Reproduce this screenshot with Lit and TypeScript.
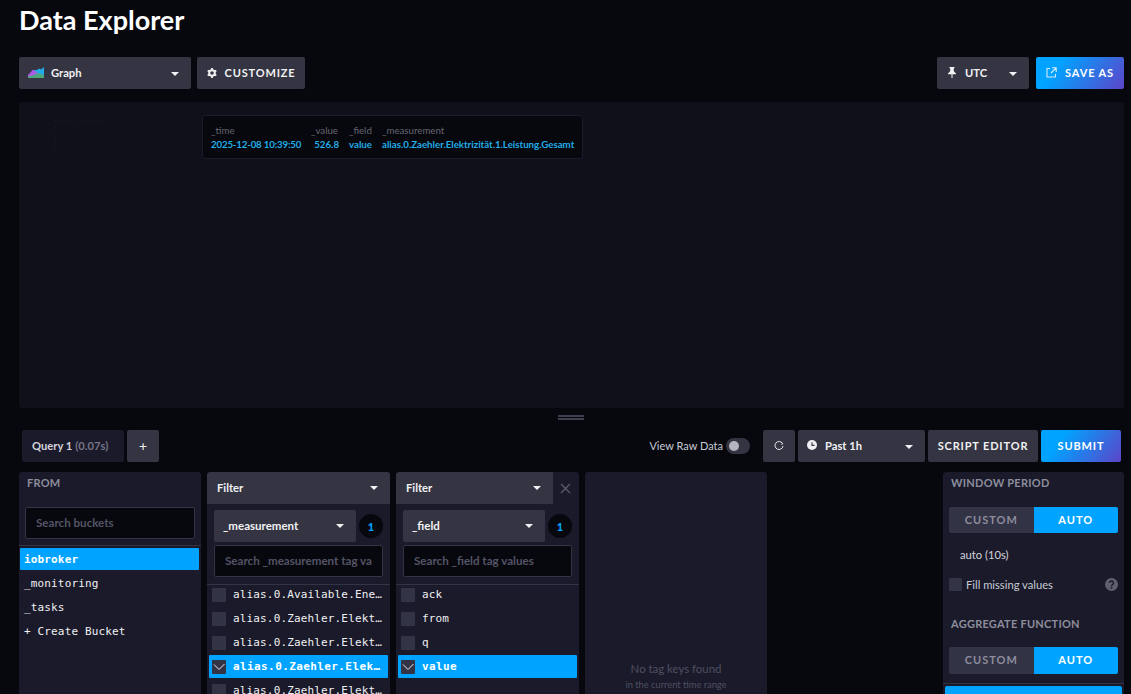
import { LitElement, html, css } from "lit";
import { customElement } from "lit/decorators.js";

const caret = html`<svg class="caret" width="8" height="4" viewBox="0 0 8 4"><path d="M0 0h8L4 4z" fill="#f1f1f3"/></svg>`;
const check = html`<svg width="14" height="14" viewBox="0 0 14 14"><path d="M2 4.500 7 9.500 12.500 4" fill="none" stroke="#e8e8f0" stroke-width="1"/></svg>`;

const m1 = [
  { t: "alias.0.Available.Energy.Total" },
  { t: "alias.0.Zaehler.Elektrizität.1.Arbeit" },
  { t: "alias.0.Zaehler.Elektrizität.1.Einspeisung" },
  { t: "alias.0.Zaehler.Elektrizität.1.Leistung.Gesamt", on: true },
  { t: "alias.0.Zaehler.Elektrizität.2.Leistung" },
];
const m2 = [{ t: "ack" }, { t: "from" }, { t: "q" }, { t: "value", on: true }];

@customElement("app-root")
export class AppRoot extends LitElement {
  static styles = css`
    :host { display: block; height: 694px; overflow: hidden; background: #07070e; color: #f1f1f3;
      font-family: "Lato", "Liberation Sans", sans-serif; font-size: 11.2px; }
    * { box-sizing: border-box; }
    .page { display: flex; flex-direction: column; padding: 0 7px 0 19px; height: 694px; overflow: hidden; }
    h1 { margin: 0; height: 57px; padding-top: 3px; font-size: 27px; line-height: 34px; font-weight: 700; color: #fff; }
    .bar { display: flex; gap: 6px; align-items: stretch; height: 32px; flex: none; }
    .grow { flex: 1; }
    .btn { height: 32px; background: #343442; border-radius: 2px; display: flex; align-items: center;
      font-weight: 700; font-size: 11.2px; color: #f1f1f3; white-space: nowrap; padding-bottom: 1px; }
    .caret { margin-top: 1px; }
    .caps { font-size: 11px; text-transform: uppercase; letter-spacing: .85px; justify-content: center; gap: 8px; }
    .drop { padding: 0 12px 2px 9px; justify-content: space-between; }
    .drop .caret { margin-top: 3px; }
    .drop span { display: flex; align-items: center; gap: 7px; }
    .grad { background: linear-gradient(125deg, #00a3ff 25%, #5c45c9 100%); color: #fff; }
    .graph-panel { position: relative; height: 306px; margin-top: 13px; background: #10101a; border-radius: 3px; flex: none; }
    .dots { position: absolute; left: 33px; top: 17px; }
    .tip { position: absolute; left: 183px; top: 13px; width: 381px; height: 44px; background: #07070e;
      border: 1px solid #1a1a2a; border-radius: 3px; padding: 7px 8px 0; display: grid; align-content: start;
      grid-template-columns: 90px 28px 23px auto; column-gap: 10px; font-size: 9.7px; line-height: 14px; }
    .tip div { white-space: nowrap; }
    .tip .h { color: #66666f; }
    .tip .v { color: #22ade6; font-weight: 700; }
    .tip .r { text-align: right; }
    .tip .d { letter-spacing: -.16px; }
    .handle { height: 22px; display: flex; align-items: center; justify-content: center; flex: none; padding: 0 2px 3px 0; }
    .handle i { width: 26px; height: 5px; border-top: 2px solid #3e3e50; border-bottom: 2px solid #3e3e50; display: block; }
    .qbar { display: flex; align-items: center; height: 32px; flex: none; padding: 0 3px; gap: 3px; }
    .tab { width: 102px; height: 32px; background: #1a1a2a; border-radius: 2px; display: flex; align-items: center; padding: 0 0 1px 10px;
      font-weight: 700; font-size: 11.2px; color: #d4d4dc; }
    .tab em { font-style: normal; color: #747484; margin-left: 3px; }
    .plus { width: 32px; justify-content: center; font-weight: 400; font-size: 14px; }
    .raw { font-size: 11px; color: #c6cad3; padding-bottom: 1px; }
    .toggle { width: 24px; height: 16px; border-radius: 8px; background: #343442; margin-right: 10px; padding: 3px; }
    .toggle i { display: block; width: 10px; height: 10px; border-radius: 50%; background: #b5b5c2; }
    .refresh { width: 32px; justify-content: center; padding-bottom: 0; }
    .cards { display: flex; gap: 6px; margin-top: 10px; flex: 1; min-height: 0; align-items: stretch; }
    .card { width: 182px; background: #1a1a2a; border-radius: 3px 3px 0 0; flex: none; overflow: hidden; display: flex; flex-direction: column; }
    .title { height: 23px; padding: 4px 0 0 8px; font-size: 11px; font-weight: 700; line-height: 13px; color: #8d8d9c; text-transform: uppercase; letter-spacing: .25px; flex: none; }
    .input { height: 32px; background: #07070e; border: 1px solid #333346; border-radius: 2px; display: flex; align-items: center; padding: 0 0 2px 10px;
      font-size: 11.6px; font-weight: 700; color: #545466; white-space: nowrap; overflow: hidden; }
    .from .input { margin: 12px 6px 6px; flex: none; }
    .sep { height: 1px; background: #333346; flex: none; }
    .list { padding: 2px 2px 0; display: flex; flex-direction: column; gap: 1px; }
    .item { height: 23px; display: flex; align-items: center; font-family: "DejaVu Sans Mono", monospace; font-size: 11px; letter-spacing: .15px; color: #f1f1f3; border-radius: 1px; flex: none; }
    .from .item { padding-left: 3px; }
    .item.on { background: #00a3ff; color: #fff; font-weight: 700; }
    .tags .item.on { letter-spacing: .4px; }
    .from .item:first-child { height: 22px; margin: 0 0 1px -1px; padding-left: 4px; }
    .cb { width: 14px; height: 14px; background: #333346; border-radius: 1px; margin: 0 7px 0 3px; flex: none; display: block; }
    .item .lbl { overflow: hidden; text-overflow: ellipsis; white-space: nowrap; flex: 1; padding-right: 4px; }
    .tags { width: 183px; }
    .fhead { display: flex; height: 32px; flex: none; }
    .fhead .btn { flex: 1; border-radius: 3px 0 0 0; padding: 0 12px 1px 10px; justify-content: space-between; }
    .x { width: 26px; display: flex; align-items: center; justify-content: center; padding-right: 2px; }
    .frow { display: flex; gap: 3px; align-items: center; padding: 6px 7px 3px; flex: none; }
    .frow .btn { width: 142px; padding: 0 12px 1px 9px; justify-content: space-between; font-size: 11.5px; }
    .badge { width: 24px; height: 24px; border-radius: 50%; background: #07070e; color: #00a3ff; font-weight: 900; font-size: 11px; display: flex; align-items: center; justify-content: center; }
    .finput { padding: 0 7px 7px; flex: none; }
    .tags .list { padding-top: 0; margin-top: -2px; }
    .empty { flex: 1; display: flex; flex-direction: column; align-items: center; justify-content: flex-end; padding-bottom: 1px; color: #4f4f60; }
    .empty b { font-weight: 400; font-size: 11.4px; line-height: 16px; }
    .empty small { font-size: 9.3px; line-height: 16px; }
    .side { width: 181px; margin-left: auto; }
    .seg { display: flex; height: 26px; margin: 12px 6px 0; flex: none; font-weight: 700; font-size: 11px; letter-spacing: 1px; }
    .seg div { flex: 1; display: flex; align-items: center; justify-content: center; padding-bottom: 1px; }
    .seg .c { background: #333346; color: #8d8d9c; border-radius: 2px 0 0 2px; }
    .seg .a { background: #00a3ff; color: #fff; border-radius: 0 2px 2px 0; }
    .auto { padding-left: 17px; height: 16px; margin-top: 14px; font-size: 11.2px; line-height: 16px; color: #d4d4dc; flex: none; }
    .fill { display: flex; align-items: center; margin: 14px 6px 0; height: 14px; flex: none; font-size: 11.2px; color: #c6cad3; }
    .fill .cb { margin: 0 4px 0 0; width: 13px; height: 13px; }
    .fill svg { margin-left: auto; }
    .agg { margin-top: 25px; height: 31px; padding-top: 1px; }
    .side .seg2 { margin-top: 0; height: 27px; }
    .side .seg2 div { padding-bottom: 2px; }
    .foot { height: 1px; background: #333346; margin-top: 9px; flex: none; }
    .bluebar { background: #00a3ff; height: 30px; margin: 2px 2px 0; border-radius: 2px 2px 0 0; flex: none; }
  `;

  private row(it: { t: string; on?: boolean }) {
    return html`<div class="item ${it.on ? "on" : ""}">
      <span class="cb">${it.on ? check : ""}</span><span class="lbl">${it.t}</span>
    </div>`;
  }

  private filter(key: string, ph: string, items: { t: string; on?: boolean }[], close: boolean) {
    return html`<section class="card tags">
      <div class="fhead">
        <div class="btn">Filter ${caret}</div>
        ${close
          ? html`<div class="x"><svg width="11" height="11" viewBox="0 0 11 11"><path d="M1 1l9 9M10 1l-9 9" stroke="#5c5c6c" stroke-width="1.300"/></svg></div>`
          : ""}
      </div>
      <div class="frow">
        <div class="btn">${key} ${caret}</div>
        <div class="badge">1</div>
      </div>
      <div class="finput"><div class="input">${ph}</div></div>
      <div class="sep"></div>
      <div class="list">${items.map((i) => this.row(i))}</div>
    </section>`;
  }

  render() {
    return html`<div class="page">
      <h1>Data Explorer</h1>
      <div class="bar">
        <div class="btn drop" style="width:172px">
          <span>
            <svg width="16" height="11" viewBox="0 0 16 11">
              <path d="M5 3 9 3 11 1.500 13 2.500 16 0V8H5z" fill="#22ade6"/>
              <path d="M0 8 5 2.500 8 4.500 10 7.500 16 8V11H0z" fill="#a85ce0"/>
              <path d="M0 9.500 5 8.500 10 6 16 8V11H0z" fill="#4ea87e"/>
            </svg>
            Graph
          </span>
          ${caret}
        </div>
        <div class="btn caps" style="width:108px">
          <svg width="10" height="10" viewBox="0 0 10 10">
            <circle cx="5" cy="5" r="2.800" fill="none" stroke="#f1f1f3" stroke-width="2"/>
            <path d="M5 0v2M5 8v2M.7 2.500l1.700 1M7.600 6.500l1.700 1M.7 7.500l1.700-1M7.600 3.500l1.700-1" stroke="#f1f1f3" stroke-width="1.800"/>
          </svg>
          Customize
        </div>
        <div class="grow"></div>
        <div class="btn drop" style="width:92px;margin-right:1px;padding-left:11px;">
          <span style="gap:9px">
            <svg width="8" height="11" viewBox="0 0 8 11"><path d="M1.500 0h5v1l-.7.500v2.700L8 6.500v.7H4.500V11h-1V7.200H0v-.7l2.200-2.300V1.500L1.500 1z" fill="#f1f1f3"/></svg>
            UTC
          </span>
          ${caret}
        </div>
        <div class="btn caps grad" style="width:88px">
          <svg width="11" height="11" viewBox="0 0 11 11"><path d="M4 1.500H1v8.500h8.500V7M6 .8h4.200V5M10 1 5 6" fill="none" stroke="#d6eaff" stroke-width="1.100"/></svg>
          Save As
        </div>
      </div>

      <div class="graph-panel">
        <svg class="dots" width="60" height="40" viewBox="0 0 60 40">
          <path d="M3 2H52M3 2V36" stroke="#181823" stroke-width="1" stroke-dasharray="2 3" fill="none"/>
        </svg>
        <div class="tip">
          <div class="h">_time</div><div class="h">_value</div><div class="h">_field</div><div class="h">_measurement</div>
          <div class="v d">2025-12-08 10:39:50</div><div class="v r">526.8</div><div class="v">value</div><div class="v">alias.0.Zaehler.Elektrizität.1.Leistung.Gesamt</div>
        </div>
      </div>

      <div class="handle"><i></i></div>

      <div class="qbar">
        <div class="tab">Query 1 <em>(0.07s)</em></div>
        <div class="btn plus">+</div>
        <div class="grow"></div>
        <div class="raw">View Raw Data</div>
        <div class="toggle"><i></i></div>
        <div class="btn refresh">
          <svg width="10" height="10" viewBox="0 0 10 10"><path d="M8.500 2.500A4 4 0 1 0 9 5M7 1l1.700 1.500L7.500 4" fill="none" stroke="#e8e8ee" stroke-width="1"/></svg>
        </div>
        <div class="btn drop" style="width:127px">
          <span style="gap:8px">
            <svg width="10" height="10" viewBox="0 0 10 10"><circle cx="5" cy="5" r="5" fill="#f1f1f3"/><path d="M5 2.200V5.400H7.500" stroke="#343442" stroke-width="1.100" fill="none"/></svg>
            Past 1h
          </span>
          ${caret}
        </div>
        <div class="btn caps" style="width:110px">Script Editor</div>
        <div class="btn caps grad" style="width:80px">Submit</div>
      </div>

      <div class="cards">
        <section class="card from">
          <div class="title">From</div>
          <div class="input">Search buckets</div>
          <div class="sep"></div>
          <div class="list">
            <div class="item on">iobroker</div>
            <div class="item">_monitoring</div>
            <div class="item">_tasks</div>
            <div class="item">+ Create Bucket</div>
          </div>
        </section>
        ${this.filter("_measurement", "Search _measurement tag va", m1, false)}
        ${this.filter("_field", "Search _field tag values", m2, true)}
        <section class="card">
          <div class="empty">
            <b>No tag keys found</b>
            <small>in the current time range</small>
          </div>
        </section>
        <section class="card side">
          <div class="title">Window Period</div>
          <div class="seg"><div class="c">CUSTOM</div><div class="a">AUTO</div></div>
          <div class="auto">auto (10s)</div>
          <div class="fill">
            <span class="cb"></span>Fill missing values
            <svg width="13" height="13" viewBox="0 0 13 13"><circle cx="6.500" cy="6.500" r="6.500" fill="#5f5f6e"/><path d="M4.500 5a2 2 0 1 1 3 1.700c-.7.400-1 .7-1 1.500" fill="none" stroke="#1a1a2a" stroke-width="1.400"/><rect x="5.700" y="9" width="1.600" height="1.600" fill="#1a1a2a"/></svg>
          </div>
          <div class="title agg">Aggregate Function</div>
          <div class="seg seg2"><div class="c">CUSTOM</div><div class="a">AUTO</div></div>
          <div class="foot"></div>
          <div class="bluebar"></div>
        </section>
      </div>
    </div>`;
  }
}
